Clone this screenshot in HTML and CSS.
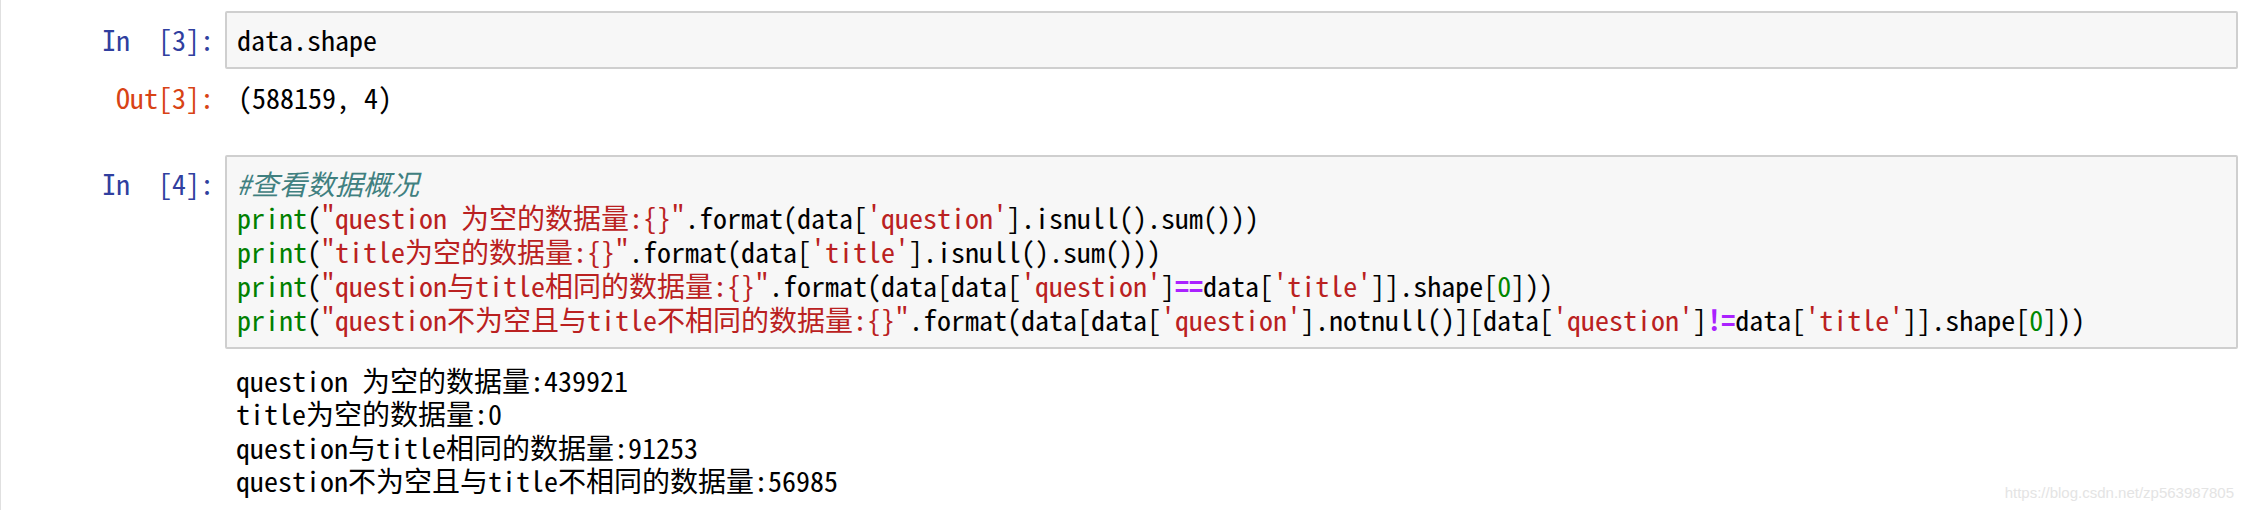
FILE: index.html
```html
<!DOCTYPE html>
<html lang="zh-CN">
<head>
    <meta charset="UTF-8">
    <title>notebook</title>
    <link rel="stylesheet" href="styles.css">
</head>
<body>
    <div class="notebook">
        <!-- cell 3 -->
        <div class="cell">
            <div class="row">
                <div class="prompt prompt-in">In&nbsp;&nbsp;[3]:</div>
                <div class="input-area"><pre>data.shape</pre></div>
            </div>
            <div class="row out-row">
                <div class="prompt prompt-out">Out[3]:</div>
                <pre class="output">(588159, 4)</pre>
            </div>
        </div>

        <!-- cell 4 -->
        <div class="cell cell-4">
            <div class="row">
                <div class="prompt prompt-in">In&nbsp;&nbsp;[4]:</div>
                <div class="input-area"><pre><span class="c">#查看数据概况</span>
<span class="b">print</span>(<span class="s">"question 为空的数据量:{}"</span>.format(data[<span class="s">'question'</span>].isnull().sum()))
<span class="b">print</span>(<span class="s">"title为空的数据量:{}"</span>.format(data[<span class="s">'title'</span>].isnull().sum()))
<span class="b">print</span>(<span class="s">"question与title相同的数据量:{}"</span>.format(data[data[<span class="s">'question'</span>]<span class="o">==</span>data[<span class="s">'title'</span>]].shape[<span class="n">0</span>]))
<span class="b">print</span>(<span class="s">"question不为空且与title不相同的数据量:{}"</span>.format(data[data[<span class="s">'question'</span>].notnull()][data[<span class="s">'question'</span>]<span class="o">!=</span>data[<span class="s">'title'</span>]].shape[<span class="n">0</span>]))</pre></div>
            </div>
            <div class="row stream-row">
                <div class="prompt"></div>
                <pre class="output stream">question 为空的数据量:439921
title为空的数据量:0
question与title相同的数据量:91253
question不为空且与title不相同的数据量:56985</pre>
            </div>
        </div>
    </div>
    <div class="watermark">https://blog.csdn.net/zp563987805</div>
</body>
</html>
```

FILE: styles.css
```css
body {
    margin: 0;
    background-color: #fff;
    font-family: "Noto Sans Mono CJK SC", "Noto Sans CJK SC", monospace;
    color: #000;
    overflow: hidden;
}
pre {
    margin: 0;
    font-family: inherit;
}
.notebook {
    border-left: 1px solid #e0e0e0;
    padding: 11px 6px 0 0;
    height: 499px;
}
.row {
    display: flex;
    align-items: flex-start;
}
.prompt {
    width: 213px;
    flex-shrink: 0;
    box-sizing: border-box;
    text-align: right;
    font-size: 28px;
    line-height: 34px;
    white-space: pre;
}
.prompt-in {
    color: #303f9f;
    padding-top: 11px;
}
.prompt-out { color: #d84315; }
.input-area {
    flex: 1;
    margin-left: 11px;
    background-color: #f7f7f7;
    border: 2px solid #cfcfcf;
    border-radius: 2px;
    padding: 9px 10px 11px;
    font-size: 28px;
    line-height: 34px;
}
.out-row { margin-top: 11px; }
.output {
    margin-left: 24px;
    font-size: 28px;
    line-height: 34px;
}
.cell-4 { margin-top: 41px; }
.stream-row { margin-top: 15px; }
.stream {
    margin-left: 22px;
    line-height: 33.4px;
}

/* syntax colours */
.c { color: #408080; font-style: italic; }
.b { color: #008000; }
.s { color: #ba2121; }
.o { color: #aa22ff; font-weight: bold; }
.n { color: #080; }

.watermark {
    position: absolute;
    right: 10px;
    bottom: 9px;
    font-family: "Liberation Sans", Arial, sans-serif;
    font-size: 15px;
    color: #e4e4e4;
}
```
